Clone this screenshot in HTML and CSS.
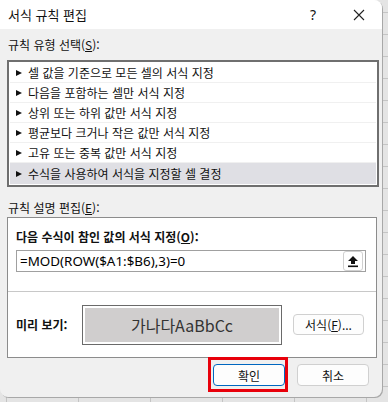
FILE: index.html
```html
<!DOCTYPE html>
<html lang="ko">
<head>
    <meta charset="UTF-8">
    <meta name="viewport" content="width=device-width, initial-scale=1.0">
    <title>서식 규칙 편집</title>
    <link rel="stylesheet" href="styles.css">
</head>
<body>
    <div class="dialog">
        <div class="title-bar">
            <span class="title">서식 규칙 편집</span>
            <span class="help">?</span>
            <span class="close">
                <svg width="12" height="12" viewBox="0 0 12 12"><path d="M1 1L11 11M11 1L1 11" stroke="#222" stroke-width="1.1"/></svg>
            </span>
        </div>
        <div class="content">
            <div class="label">규칙 유형 선택(<u>S</u>):</div>
            <ul class="rule-list">
                <li><i class="arrow"></i>셀 값을 기준으로 모든 셀의 서식 지정</li>
                <li><i class="arrow"></i>다음을 포함하는 셀만 서식 지정</li>
                <li><i class="arrow"></i>상위 또는 하위 값만 서식 지정</li>
                <li><i class="arrow"></i>평균보다 크거나 작은 값만 서식 지정</li>
                <li><i class="arrow"></i>고유 또는 중복 값만 서식 지정</li>
                <li class="selected"><i class="arrow"></i>수식을 사용하여 서식을 지정할 셀 결정</li>
            </ul>
            <div class="label label-desc">규칙 설명 편집(<u>E</u>):</div>
            <div class="desc-box">
                <div class="desc-top">
                    <div class="bold-label">다음 수식이 참인 값의 서식 지정(<u>O</u>):</div>
                    <div class="formula">
                        <span>=MOD(ROW($A1:$B6),3)=0</span>
                        <span class="pick-btn">
                            <svg width="12" height="13" viewBox="0 0 12 13"><path d="M6 1L11 6H8V9H4V6H1Z" fill="#111"/><rect x="1" y="10.5" width="10" height="1.6" fill="#111"/></svg>
                        </span>
                    </div>
                </div>
                <div class="preview-row">
                    <span class="bold-label">미리 보기:</span>
                    <div class="preview">가나다AaBbCc</div>
                    <button class="btn btn-format">서식(<u>F</u>)...</button>
                </div>
            </div>
            <div class="actions">
                <button class="btn btn-ok">확인</button>
                <button class="btn">취소</button>
            </div>
        </div>
    </div>
</body>
</html>
```

FILE: styles.css
```css
body {
    margin: 0;
    width: 388px;
    height: 402px;
    overflow: hidden;
    font-family: "Noto Sans CJK KR", "Noto Sans", sans-serif;
    font-size: 12px;
    color: #111;
    background-color: #e4e4e4;
    background-image:
        repeating-linear-gradient(to right, transparent 0, transparent 6px, #c4c4c4 6px, #c4c4c4 7px, transparent 7px, transparent 72px),
        repeating-linear-gradient(to bottom, transparent 0, transparent 12px, #c4c4c4 12px, #c4c4c4 13px, transparent 13px, transparent 22px);
}
.dialog {
    width: 382px;
    height: 397px;
    background-color: #f0f0f0;
    border-radius: 0 8px 8px 8px;
    box-shadow: 1px 1px 0 #a8a8a8;
    overflow: hidden;
}
.title-bar {
    display: flex;
    align-items: center;
    height: 29px;
    background-color: #fff;
    padding-left: 8px;
}
.title {
    flex: 1;
    font-size: 13px;
}
.help {
    width: 46px;
    text-align: center;
    font-family: "Noto Sans", sans-serif;
    font-size: 14px;
}
.close {
    width: 46px;
    display: flex;
    justify-content: center;
}
.content {
    padding: 0 5px 0 7px;
}
.label {
    height: 31px;
    line-height: 32px;
    padding-left: 1px;
}
.rule-list {
    list-style: none;
    margin: 0;
    width: 366px;
    padding: 1px;
    background-color: #fff;
    border: 2px solid #6f6f6f;
}
.rule-list li {
    display: flex;
    align-items: center;
    height: 20px;
    border-bottom: 1px solid #f0f0f0;
    box-sizing: border-box;
    padding-left: 6px;
}
.rule-list li.selected {
    background-color: #dfdfe4;
    border-bottom: none;
    height: 21px;
}
.arrow {
    width: 0;
    height: 0;
    border-top: 3.5px solid transparent;
    border-bottom: 3.5px solid transparent;
    border-left: 6px solid #111;
    margin-right: 6px;
}
.label-desc {
    height: 30px;
    line-height: 42px;
}
.desc-box {
    width: 368px;
    height: 139px;
    background-color: #fff;
    border: 1px solid #8c8c8c;
}
.desc-top {
    height: 73px;
    padding: 0 10px 0 8px;
    border-bottom: 1px solid #c8c8c8;
}
.bold-label {
    font-weight: bold;
}
.desc-top .bold-label {
    height: 32px;
    line-height: 38px;
}
.formula {
    display: flex;
    align-items: center;
    justify-content: space-between;
    height: 20px;
    border: 1px solid #a0a0a0;
    padding: 0 2px 0 3px;
    font-family: "Noto Sans", sans-serif;
    font-size: 13.4px;
    color: #000;
}
.pick-btn {
    display: flex;
    align-items: center;
    justify-content: center;
    width: 18px;
    height: 18px;
    border: 1px solid #d0d0d0;
    border-radius: 3px;
    background-color: #fff;
}
.preview-row {
    display: flex;
    align-items: center;
    height: 65px;
    padding-left: 8px;
}
.preview-row .bold-label {
    width: 66px;
}
.preview {
    width: 194px;
    height: 34px;
    border: 1px solid #6a6a6a;
    padding: 2px;
    background-color: #d0cece;
    background-clip: content-box;
    display: flex;
    align-items: center;
    justify-content: center;
    font-size: 16px;
    color: #333;
    box-sizing: content-box;
}
.btn {
    font-family: "Noto Sans CJK KR", "Noto Sans", sans-serif;
    font-size: 12px;
    color: #111;
    width: 72px;
    height: 22px;
    padding: 0;
    background-color: #fdfdfd;
    border: 1px solid #d0d0d0;
    border-radius: 4px;
}
.btn-format {
    width: 71px;
    height: 21px;
    margin-left: 11px;
}
.actions {
    display: flex;
    justify-content: flex-end;
    gap: 12px;
    padding: 6px 8px 0 0;
}
.btn-ok {
    position: relative;
    border-color: #0067c0;
}
.btn-ok::after {
    content: "";
    position: absolute;
    top: -8px;
    left: -6px;
    right: -4px;
    bottom: -7px;
    border: 3px solid #e8000b;
}
```
